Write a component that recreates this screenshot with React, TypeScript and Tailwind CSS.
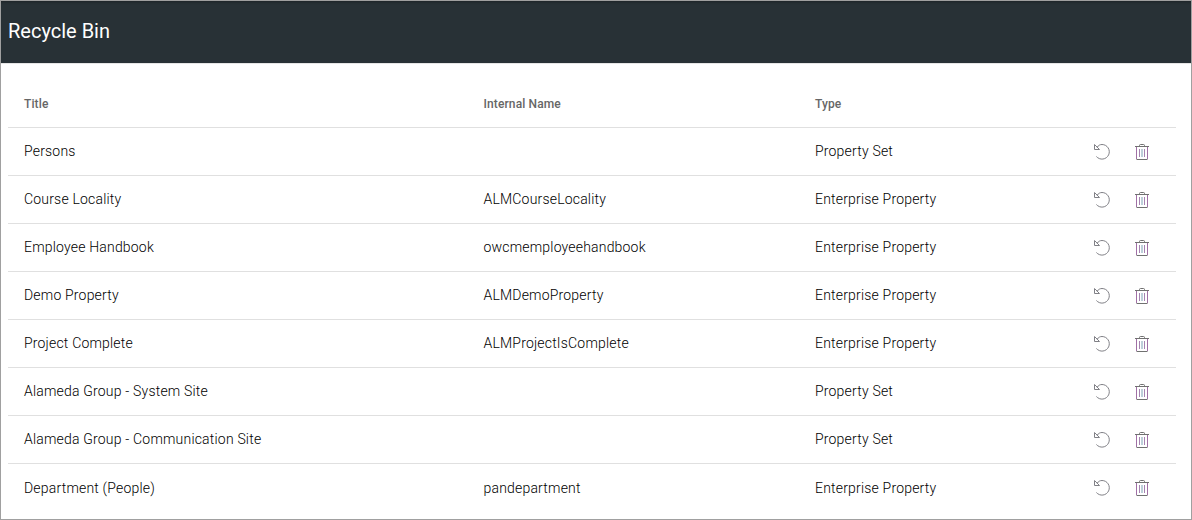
const rows: [string, string, string][] = [
  ['Persons', '', 'Property Set'],
  ['Course Locality', 'ALMCourseLocality', 'Enterprise Property'],
  ['Employee Handbook', 'owcmemployeehandbook', 'Enterprise Property'],
  ['Demo Property', 'ALMDemoProperty', 'Enterprise Property'],
  ['Project Complete', 'ALMProjectIsComplete', 'Enterprise Property'],
  ['Alameda Group - System Site', '', 'Property Set'],
  ['Alameda Group - Communication Site', '', 'Property Set'],
  ['Department (People)', 'pandepartment', 'Enterprise Property'],
];

function RestoreIcon() {
  return (
    <svg width="18" height="18" viewBox="0 0 18 18" fill="none" stroke="#808086" strokeWidth="1">
      <path d="M1.500 1.500v5h5zM4.200 4.200C5.400 2.300 7.200 1.500 9 1.500a7.300 7.300 0 1 1-5.600 12" />
    </svg>
  );
}

function TrashIcon() {
  return (
    <svg width="14" height="16" viewBox="0 0 14 16" fill="none">
      <path d="M0 2.500h14M4.500 2.500v-1q0-1 1-1h3q1 0 1 1v1M1.500 15.500h11" stroke="#707070" />
      <path d="M1.500 3v12M12.500 3v12" stroke="#a070a5" />
      <path d="M4.500 5v8M9.500 5v8" stroke="#a583b0" />
      <path d="M7 5v8" stroke="#7da1b5" />
    </svg>
  );
}

export default function App() {
  return (
    <div className="flex h-[520px] w-[1192px] flex-col overflow-hidden border border-[#a0a0a0] bg-white font-['Roboto',sans-serif] text-[14px] font-[350] tracking-[0.19px] text-black">
      <header className="flex h-[62px] shrink-0 items-center bg-[#283136] pb-[2px] pl-[7px] text-[20px] font-normal tracking-normal text-white shadow-[inset_0_3px_3px_-2px_rgba(0,0,0,0.3)]">
        Recycle Bin
      </header>
      <main className="border-t border-[#e5e5e5] pt-[15px] pr-[15px] pl-[7px]">
        <div className="grid h-[49px] grid-cols-[459.5px_331.5px_1fr] items-center border-b border-[#e0e0e0] pt-[2px] pl-[16px] text-[12px] font-medium tracking-[0.12px] text-[#666]">
          <span>Title</span>
          <span>Internal Name</span>
          <span>Type</span>
        </div>
        {rows.map(([title, name, type]) => (
          <div key={title} className="grid h-[48px] grid-cols-[459.5px_331.5px_1fr_auto] items-center border-b border-[#e0e0e0] pr-[27px] pl-[16px] last:border-b-0">
            <span>{title}</span>
            <span>{name}</span>
            <span>{type}</span>
            <span className="flex items-center gap-[24px]">
              <RestoreIcon />
              <TrashIcon />
            </span>
          </div>
        ))}
      </main>
    </div>
  );
}
